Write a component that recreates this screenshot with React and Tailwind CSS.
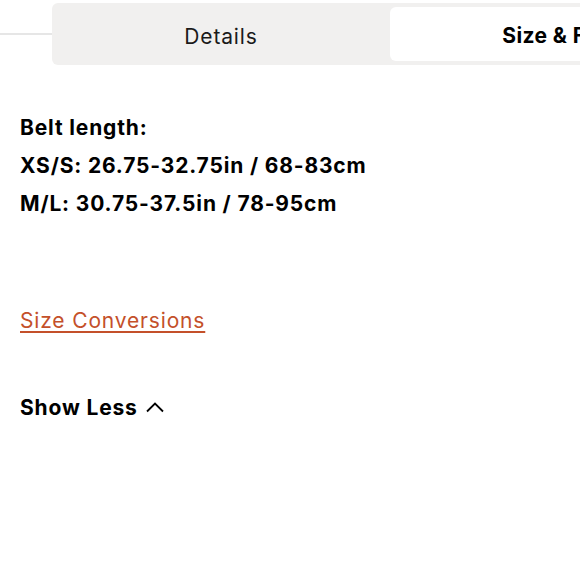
import React from 'react';

const App = () => {
    return (
        <div className="w-[580px] h-[580px] overflow-hidden bg-white" style={{ fontFamily: 'Inter, "Liberation Sans", Arial, sans-serif' }}>
            {/* tab bar */}
            <div className="flex items-center pt-[3px]">
                <div className="w-[52px] h-[2px] bg-[#e6e6e6] shrink-0" />
                <div className="flex shrink-0 gap-1 p-1 bg-[#f1f0ef] rounded-md w-[680px] h-[62px]">
                    <div className="w-[330px] flex items-center justify-center pt-[5px] text-[21px] tracking-[0.04em] text-[#1a1a1a]">
                        Details
                    </div>
                    <div className="w-[322px] flex items-center justify-center pt-[3px] bg-white rounded-md text-[21px] font-bold tracking-[0.02em] text-black">
                        Size &amp; Fit
                    </div>
                </div>
            </div>

            {/* content */}
            <div className="px-5 pt-[44px]">
                <div className="text-[21px] font-bold tracking-[0.04em] text-black leading-[38px]">
                    <p>Belt length:</p>
                    <p>XS/S: 26.75-32.75in / 68-83cm</p>
                    <p>M/L: 30.75-37.5in / 78-95cm</p>
                </div>

                <a className="inline-block mt-[82px] text-[21px] tracking-[0.04em] text-[#c4502a] underline underline-offset-[3px] decoration-2">
                    Size Conversions
                </a>

                <div className="flex items-center gap-2 mt-[55px] text-[21px] font-bold tracking-[0.04em] text-black">
                    <span>Show Less</span>
                    <svg width="18" height="12" viewBox="0 0 18 12" fill="none" stroke="black" strokeWidth="1.8">
                        <path d="M1 10.5 L9 2.5 L17 10.5" />
                    </svg>
                </div>
            </div>
        </div>
    );
};

export default App;
